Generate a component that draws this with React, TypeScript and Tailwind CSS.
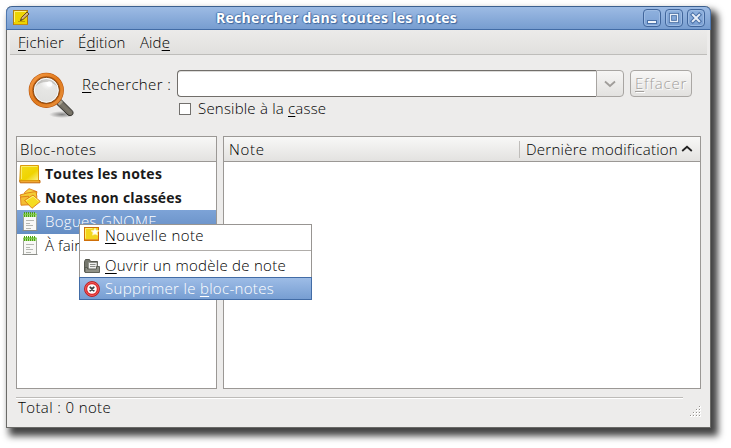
import type { ReactNode } from "react";

const U = ({ children }: { children: ReactNode }) => (
  <span className="underline decoration-1 underline-offset-2">{children}</span>
);

function AppIcon() {
  return (
    <svg className="h-4 w-4" viewBox="0 0 16 16">
      <rect x=".5" y=".5" width="14" height="14" fill="#edd400" stroke="#b17d12" />
      <path d="M1.5 12V1.5H13" fill="none" stroke="#fff27a" />
      <path d="M1 14.5h14" stroke="#c98a12" />
      <path d="M5 11.5h7" stroke="#c4a000" />
      <path d="M7.5 10.5l1-3L14 2l2 2-6 5.5z" fill="#d8b47c" stroke="#5c3f14" strokeWidth=".9" />
      <path d="M7.3 10.8l.8-1.6.8.8z" fill="#222" />
    </svg>
  );
}

function Magnifier() {
  return (
    <svg className="h-12 w-12" viewBox="0 0 48 48">
      <defs>
        <linearGradient id="ring" x1="0" y1="0" x2="1" y2="1">
          <stop offset="0" stopColor="#f59a44" />
          <stop offset=".5" stopColor="#e07a1c" />
          <stop offset="1" stopColor="#e8913c" />
        </linearGradient>
        <radialGradient id="glass" cx=".55" cy=".25" r=".8">
          <stop offset="0" stopColor="#ffffff" />
          <stop offset=".3" stopColor="#e6e6e4" />
          <stop offset="1" stopColor="#dededc" />
        </radialGradient>
        <linearGradient id="handle" x1="0" y1="1" x2="1" y2="0">
          <stop offset="0" stopColor="#2b2a26" />
          <stop offset=".5" stopColor="#7d786c" />
          <stop offset="1" stopColor="#3c3a34" />
        </linearGradient>
        <radialGradient id="floor">
          <stop offset="0" stopColor="#000" stopOpacity=".45" />
          <stop offset="1" stopColor="#000" stopOpacity="0" />
        </radialGradient>
      </defs>
      <ellipse cx="35" cy="44.500" rx="13" ry="3.500" fill="url(#floor)" />
      <path d="M29.500 34l4.500-4.500 11 11c1.500 1.500 1.300 3.200.2 4.300-1.200 1-2.800 1-4.200.2z" fill="url(#handle)" stroke="#2e2c28" />
      <path d="M30.500 33.500l3.500-3.500 2 2-3.500 3.500z" fill="#a9a290" />
      <circle cx="19.300" cy="20.300" r="15.200" fill="url(#glass)" stroke="#b9540a" strokeWidth="4.800" />
      <circle cx="19.300" cy="20.300" r="15.500" fill="none" stroke="url(#ring)" strokeWidth="3" />
      <circle cx="19.300" cy="20.300" r="13" fill="none" stroke="#8a5018" strokeWidth="1" />
      <path d="M8 17c2-5 6-8 11.300-8s9.500 3 11.300 8c-3-3.500-7-5-11.300-5s-8.300 1.500-11.300 5z" fill="#6d6a64" opacity=".3" />
      <circle cx="19.300" cy="20.300" r="11.900" fill="none" stroke="#fff" strokeWidth="1" opacity=".7" />
      <circle cx="22.500" cy="14" r="2.800" fill="#fff" opacity=".9" />
    </svg>
  );
}

function AllNotesIcon() {
  return (
    <svg className="h-[19px] w-[22px]" viewBox="0 0 22 19">
      <defs>
        <linearGradient id="yel" x1="0" y1="0" x2="1" y2="1">
          <stop offset="0" stopColor="#f3dc1c" />
          <stop offset=".6" stopColor="#f0d400" />
          <stop offset="1" stopColor="#fbf08a" />
        </linearGradient>
      </defs>
      <path d="M.5 15.500h20.500v2.300H1.200z" fill="#f0a830" stroke="#c4680a" />
      <path d="M1.500.5h18v15H.8z" fill="url(#yel)" stroke="#dc9a0c" />
      <path d="M2.500 14V1.500h16" fill="none" stroke="#fdf27c" strokeWidth=".8" />
    </svg>
  );
}

function UnfiledIcon() {
  return (
    <svg className="h-[21px] w-[22px]" viewBox="0 0 22 21">
      <g stroke="#dd7a12" strokeWidth=".9" strokeLinejoin="round">
        <path d="M5.500 4.500L10 .7l8 3-2 8-9-2z" fill="#f8d84a" />
        <path d="M1 7l7-2L17 3.500l1 6-6 4-9-2z" fill="#f4cc34" />
        <path d="M1.500 9l8-.8 1.500 8.600-9 .4z" fill="#f3bd34" />
        <path d="M5.500 12.500L14 7l7.300 6.500-8.300 6.800z" fill="#f5dc22" />
      </g>
      <path d="M7 12.700l7-4.500 5.700 5.100" fill="none" stroke="#fff39a" strokeWidth=".8" />
    </svg>
  );
}

function NotebookIcon() {
  return (
    <svg className="h-5 w-[18px]" viewBox="0 0 18 20">
      <path d="M2.500 2.500h13v16h-13z" fill="#f8f8f6" stroke="#a2a49f" />
      <path d="M1.500 18.500h15" stroke="#8b8d88" />
      <path d="M2.500 1h13v4h-13z" fill="#a5e07a" />
      <path d="M3.500 0v5M5.500 0v5M7.500 0v5M9.500 0v5M11.500 0v5M13.500 0v5" stroke="#4fa014" />
      <path d="M2 2.500h14" stroke="#7cc64c" strokeWidth=".8" />
      <path d="M5 8.500h8M5 11.500h4M5 13.500h7M5 16.500h5" stroke="#b5b7b2" />
    </svg>
  );
}

function NewNoteIcon() {
  return (
    <svg className="h-4 w-4" viewBox="0 0 16 16">
      <rect x=".5" y=".5" width="14" height="13" fill="#f3d51c" stroke="#cf6f08" />
      <path d="M1 12.500h13" stroke="#e59a24" />
      <path d="M1.500 11.500V1.500h7" fill="none" stroke="#fff06e" />
      <path d="M11 1.200l1.200 2.300 2.600.3-1.900 1.700.5 2.600L11 6.900 8.700 8.100l.4-2.600-1.900-1.700 2.600-.3z" fill="#fff" stroke="#fff7b0" strokeWidth=".9" />
    </svg>
  );
}

function TemplateIcon() {
  return (
    <svg className="h-4 w-4" viewBox="0 0 16 16">
      <path d="M.5 13.500V3.500l1-2h4l1 2h7v10z" fill="#74766c" stroke="#55574e" />
      <path d="M4.500 4.500h8.500v7H4.500z" fill="#f1f1ef" stroke="#8b8d87" strokeWidth=".8" />
      <path d="M6 6.500h5.500M6 8.500h5.500" stroke="#8b8d87" />
      <path d="M1 14.500V9.500h2.500V11h9V8.500h3v6z" fill="#8f9187" stroke="#55574e" strokeWidth=".9" />
    </svg>
  );
}

function DeleteIcon() {
  return (
    <svg className="h-4 w-4" viewBox="0 0 16 16">
      <circle cx="8" cy="8" r="7.500" fill="#dc2a2a" stroke="#b81414" strokeWidth=".8" />
      <circle cx="8" cy="8" r="6.500" fill="none" stroke="#f46a6a" strokeWidth=".8" />
      <circle cx="8" cy="8" r="4.800" fill="#fff" />
      <path d="M6.300 6.300l3.400 3.400M9.700 6.300L6.300 9.700" stroke="#3c4244" strokeWidth="1.900" strokeLinecap="round" />
    </svg>
  );
}

function WinButton({ children }: { children: ReactNode }) {
  return (
    <div className="h-[18px] w-[18px] rounded-[4px] border border-[#41669c] bg-gradient-to-b from-[#8fb1de] to-[#7ba0d3] shadow-[inset_0_0_0_1px_#9dbbe3]">
      <svg className="h-4 w-4" viewBox="0 0 16 16">{children}</svg>
    </div>
  );
}

const header = "flex h-[25px] shrink-0 items-center border-b border-[#9b9895] bg-gradient-to-b from-[#f8f8f7] to-[#e3e2e0]";
const gripRows = [1, 2, 3, 4];

export default function App() {
  return (
    <div className="h-[448px] w-[731px] overflow-hidden bg-white pl-1.5 pt-1.5 font-['Open_Sans',sans-serif] text-[15px] font-[340] leading-6 whitespace-pre text-black">
      <div className="relative flex h-[422px] w-[705px] flex-col rounded-t-[6px] border border-t-0 border-[#6b6b68] bg-[#edeceb] shadow-[5px_6px_7px_2px_rgba(0,0,0,0.74)]">
        <div className="-mx-px flex h-6 shrink-0 items-center rounded-t-[6px] border border-t-[#3c608f] border-x-[#4e78b0] border-b-[#426ca6] bg-gradient-to-b from-[#9dbbe4] to-[#779dd0] pl-1.5 pr-[5px]">
          <AppIcon />
          <div className="flex-1 pl-[187px] text-[14px] leading-5 font-bold tracking-[0.3px] text-white [text-shadow:1px_1px_1px_#3c659c,-1px_0_1px_#5279ae,0_-1px_1px_#6489bd]">Rechercher dans toutes les notes</div>
          <div className="flex gap-1">
            <WinButton>
              <rect x="3.500" y="10.500" width="9" height="3" fill="#f0f4fa" stroke="#4a70a6" />
            </WinButton>
            <WinButton>
              <rect x="4.500" y="4.500" width="7" height="7" fill="none" stroke="#4a70a6" strokeWidth="3.200" />
              <rect x="4.500" y="4.500" width="7" height="7" fill="none" stroke="#e9eff8" strokeWidth="1.300" />
            </WinButton>
            <WinButton>
              <path d="M4.800 4.800l6.400 6.400M11.200 4.800l-6.400 6.400" stroke="#4a70a6" strokeWidth="4" strokeLinecap="square" />
              <path d="M4.800 4.800l6.400 6.400M11.200 4.800l-6.400 6.400" stroke="#e9eff8" strokeWidth="2" strokeLinecap="square" />
            </WinButton>
          </div>
        </div>

        <div className="mx-[3px] flex h-[25px] shrink-0 border-b border-[#bebdba] bg-gradient-to-b from-[#ecebea] to-[#e1e0de] pl-2">
          <div className="w-[60px] tracking-[0.23px]"><U>F</U>ichier</div>
          <div className="w-[62px] tracking-[0.12px]">É<U>d</U>ition</div>
          <div className="tracking-[0.1px]">Aid<U>e</U></div>
        </div>

        <div className="flex h-[81px] shrink-0 pl-5 pt-[15px]">
          <Magnifier />
          <div className="ml-[6px] w-[96px] pt-0.5 pl-px tracking-[0.36px]"><U>R</U>echercher :</div>
          <div>
            <div className="flex h-[27px]">
              <div className="w-[419px] rounded-l-[4px] border border-r-0 border-[#716e6a] bg-white shadow-[inset_0_1px_0_#dcdbd9]" />
              <div className="flex w-[28px] items-center justify-center rounded-r-[4px] border border-[#a8a5a2] bg-gradient-to-b from-[#f6f5f4] to-[#e3e2e0]">
                <svg className="h-3 w-3" viewBox="0 0 12 12"><path d="M1 3.500l5 4.500 5-4.500" fill="none" stroke="#a09d9a" strokeWidth="1.800" /></svg>
              </div>
              <div className="ml-1.5 w-[62px] rounded-[4px] border border-[#aaa7a4] bg-gradient-to-b from-[#f8f7f6] to-[#e2e1df] pl-1 leading-[25px] tracking-[0.8px] text-[#a3a09d] [text-shadow:1px_1px_0_#fff]"><U>E</U>ffacer</div>
            </div>
            <div className="flex h-6 items-center">
              <div className="ml-0.5 mr-[7px] h-3 w-3 border border-[#72706d] bg-white" />
              <div className="-mt-0.5 tracking-[0.2px]">Sensible à la <U>c</U>asse</div>
            </div>
          </div>
        </div>

        <div className="ml-[9px] flex h-[253px] shrink-0 gap-1.5">
          <div className="flex w-[201px] flex-col border border-[#9b9895] bg-white">
            <div className={header}><span className="pl-[3px] tracking-[0.5px]">Bloc-notes</span></div>
            <div className="flex h-6 items-center text-[14px] font-bold tracking-[0.24px] text-[#1a1a1a]">
              <div className="w-7 pl-0.5"><AllNotesIcon /></div>Toutes les notes
            </div>
            <div className="flex h-6 items-center text-[14px] font-bold tracking-[0.22px] text-[#1a1a1a]">
              <div className="w-7 pl-0.5"><UnfiledIcon /></div>Notes non classées
            </div>
            <div className="flex h-6 items-center bg-gradient-to-b from-[#7da3d7] to-[#648dc4] leading-[22px] tracking-[0.3px] text-white">
              <div className="w-7 pl-1"><NotebookIcon /></div><div className="h-6">Bogues GNOME</div>
            </div>
            <div className="flex h-6 items-center leading-[22px] tracking-[0.1px]">
              <div className="w-7 pl-1"><NotebookIcon /></div><div className="h-6">À faire</div>
            </div>
          </div>
          <div className="w-[478px] border border-[#9b9895] bg-white">
            <div className={header}>
              <div className="h-[17px] w-[296px] border-r border-[#bfbdba] pl-[5px] leading-[17px] tracking-[0.7px]">Note</div>
              <div className="pl-1.5 tracking-[0.26px]">Dernière modification</div>
              <svg className="ml-[3px] h-3 w-3" viewBox="0 0 12 12"><path d="M1.200 8L6 3.800 10.800 8" fill="none" stroke="#222" strokeWidth="1.800" /></svg>
            </div>
          </div>
        </div>

        <div className="ml-[9px] mt-2 h-0.5 w-[667px] shrink-0 border-t border-[#bdbbb8] bg-white" />
        <div className="flex justify-between pl-[11px] pr-[9px]">
          <div className="-mt-1 tracking-[0.38px]">Total : 0 note</div>
          <svg className="mt-[6px] h-3 w-3" viewBox="0 0 12 12" shapeRendering="crispEdges">
            {gripRows.map((n) =>
              Array.from({ length: n }, (_, i) => (
                <g key={`${n}-${i}`}>
                  <rect x={10 - i * 3} y={n * 3 - 2} width="2" height="2" fill="#fff" />
                  <rect x={10 - i * 3} y={n * 3 - 2} width="1" height="1" fill="#96938f" />
                </g>
              ))
            )}
          </svg>
        </div>

        <div className="absolute left-[72px] top-[218px] flex h-[76px] w-[233px] flex-col border border-[#989592] bg-white">
          <div className="flex h-[26px] gap-[5px] border-b border-[#b0adaa] pl-1">
            <div className="pt-[2px]"><NewNoteIcon /></div>
            <div className="-mt-0.5 tracking-[0.43px]"><U>N</U>ouvelle note</div>
          </div>
          <div className="flex h-[26px] items-end gap-[5px] pl-1">
            <div className="pb-[3px]"><TemplateIcon /></div>
            <div className="h-6 tracking-[0.27px]"><U>O</U>uvrir un modèle de note</div>
          </div>
          <div className="-mx-px -mb-px flex h-[23px] items-center gap-[5px] border border-[#426ca6] bg-gradient-to-b from-[#9dbce6] to-[#779ed2] pl-1 tracking-[0.31px] text-white">
            <DeleteIcon />
            <div className="-mt-0.5">Supprimer le <U>b</U>loc-notes</div>
          </div>
        </div>
      </div>
    </div>
  );
}
